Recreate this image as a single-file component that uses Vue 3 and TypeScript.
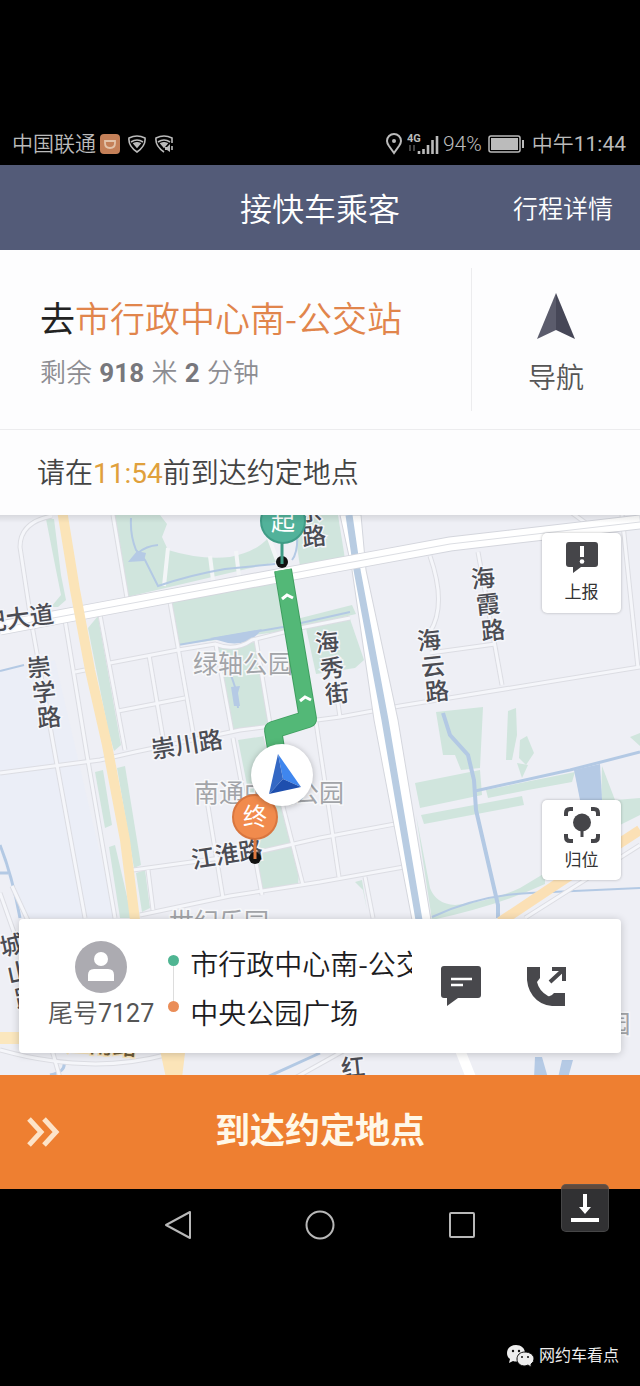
<script setup lang="ts">
interface Glyph { t: string; x: number; y: number; r: number }

const minorRoads: string[] = [
  'M0 773L100 760L135 752L240 730L340 717L400 706L640 667',
  'M133 870L250 854L320 838L395 824L406 815',
  'M140 915L230 896L320 882L415 865',
  'M52 516Q20 522 20 547L31 620L57 765L85 918',
  'M65 620L87 755L115 918',
  'M100 615L125 750',
  'M113 515L127 598',
  'M170 602L193 732',
  'M110 663L178 650L215 644Q235 652 252 640L300 628L350 618',
  'M118 711L185 698',
  'M149 655L163 738',
  'M216 645L232 732',
  'M256 640L271 730',
  'M207 800L223 898',
  'M233 738L262 895',
  'M265 736L303 885',
  'M316 722L339 877',
  'M430 556Q447 605 430 632L430 640',
  'M478 552L502 685',
  'M430 653L495 644',
  'M365 877L373 918',
  'M75 672L85 670',
  'M148 870L153 910',
  'M622 515L638 668',
  'M572 513L590 526',
  'M336 690L340 717',
  'M525 918L585 880L640 845',
  'M0 893L22 955',
  'M12 886L30 925',
  'M0 1050Q90 1075 165 1055',
  'M52 1050L60 1078',
  'M295 1078L345 1050',
]

const parks: string[] = [
  '46,519 54,519 61,575 66,600 58,607 51,607 61,595 56,570',
  '114,515 264,515 276,562 127,597',
  '292,515 338,515 345,559 300,566',
  '172,602 276,583 285,631 178,645',
  '285,622 352,605 356,614 285,631',
  '306,628 350,619 364,660 355,668 316,674',
  '217,647 255,642 272,727 232,732',
  '88,628 98,616 121,745 114,751 108,730',
  '95,772 103,770 112,825 105,828',
  '117,768 125,766 141,865 134,868',
  '109,847 115,845 132,918 120,918',
  '136,873 145,870 150,908 142,912',
  '238,740 265,736 300,865 298,884 262,889 250,800',
  '436,712 483,707 480,768 461,770 455,755 443,755',
  '415,783 480,770 482,795 420,808',
  '421,815 522,796 524,805 424,824',
  '486,790 575,772 572,782 528,790 488,798',
  '508,711 516,708 517,735 512,760 506,760 507,735',
  '520,740 527,736 534,753 526,765 519,758',
  '517,763 528,765 522,778',
  '602,766 615,800 640,798 640,815 600,835',
  '355,882 362,880 367,910 363,890',
  '630,737 640,733 640,746',
]

const pieces = (chars: string, pts: number[][], r: number): Glyph[] =>
  [...chars].map((t, i) => ({ t, x: pts[i][0], y: pts[i][1], r }))

const streets: Glyph[] = [
  { t: '纪大道', x: 18, y: 619, r: -8 },
  { t: '崇川路', x: 187, y: 745, r: -9 },
  { t: '江淮路', x: 227, y: 855, r: -9 },
  { t: '红', x: 353, y: 1068, r: -6 },
  ...pieces('崇学路', [[39, 668], [44, 693], [49, 718]], -6),
  ...pieces('海秀街', [[327, 643], [332, 669], [337, 694]], -6),
  ...pieces('海霞路', [[483, 579], [488, 605], [493, 631]], -6),
  ...pieces('海云路', [[429, 641], [433, 667], [437, 692]], -6),
  ...pieces('京路', [[310, 512], [314, 537]], -6),
  ...pieces('城山路', [[12, 946], [19, 973], [27, 998]], -12),
]

const places: Glyph[] = [
  { t: '绿轴公园', x: 243, y: 664, r: 0 },
  { t: '南通中央公园', x: 269, y: 793, r: 0 },
  { t: '世纪乐园', x: 219, y: 922, r: 0 },
  { t: '园', x: 618, y: 1024, r: 0 },
]
</script>

<template>
  <div class="page">
    <div class="status">
      <div class="status-group">
        <span>中国联通</span>
        <svg width="20" height="20" viewBox="0 0 20 20">
          <rect width="20" height="20" rx="4" fill="#c48058" />
          <path d="M5 7H15V9Q15 14 10 14Q5 14 5 9Z" fill="none" stroke="#e3c3a9" stroke-width="1.8" />
        </svg>
        <svg class="shield" width="20" height="20" viewBox="0 0 20 20" fill="none" stroke="#bbb" stroke-width="1.6">
          <path d="M2 4Q10 0 18 4Q19 12 10 18Q1 12 2 4Z" />
          <path d="M4 8Q10 4 16 8" /><path d="M7 9.5Q10 8 13 9.5L10 13Z" fill="#bbb" />
        </svg>
        <svg class="shield" width="20" height="20" viewBox="0 0 20 20" fill="none" stroke="#bbb" stroke-width="1.6">
          <path d="M10 18Q1 12 2 4Q10 0 18 4V9" />
          <path d="M4 8Q10 4 16 8" /><path d="M7 9.5Q10 8 13 9.5L10 13Z" fill="#bbb" />
          <path d="M11 13H13L16 10V18L13 16H11Z" fill="#bbb" stroke="none" /><path d="M18 12V16" />
        </svg>
      </div>
      <div class="status-group">
        <svg width="18" height="22" viewBox="0 0 18 22" fill="none" stroke="#bbb" stroke-width="2">
          <path d="M9 20L4 13Q2 10 2 8A7 7 0 0 1 16 8Q16 10 14 13Z" /><circle cx="9" cy="8" r="2" fill="#bbb" stroke="none" />
        </svg>
        <svg class="signal" width="32" height="24" viewBox="0 0 32 24">
          <text x="0" y="10" class="net">4G</text>
          <path d="M3 13V19M7 13V19" stroke="#444" stroke-width="2" />
          <path d="M12 19V22M16.5 17V22M21 13V22M25.5 8V22M30 4V22" stroke="#bbb" stroke-width="2.6" />
        </svg>
        <span>94%</span>
        <svg class="battery" width="37" height="18" viewBox="0 0 37 18">
          <rect x="1" y="1" width="31" height="16" rx="2" fill="none" stroke="#bbb" stroke-width="1.5" />
          <rect x="3" y="3" width="27" height="12" fill="#bbb" /><path d="M35 5V13" stroke="#bbb" stroke-width="2" />
        </svg>
        <span>中午<span class="digits">11:44</span></span>
      </div>
    </div>

    <header class="head">
      <h1>接快车乘客</h1>
      <a href="#trip">行程详情</a>
    </header>

    <section class="dest">
      <div class="dest-text">
        <h2>去<span>市行政中心南-公交站</span></h2>
        <p>剩余 <b>918</b> 米 <b>2</b> 分钟</p>
      </div>
      <button class="nav-btn" type="button">
        <svg width="38" height="46" viewBox="0 0 38 46">
          <path d="M19 0L0 46L19 37Z" fill="#5b5c6c" /><path d="M19 0L38 46L19 37Z" fill="#464757" />
        </svg>
        导航
      </button>
    </section>
    <p class="deadline">请在<time>11:54</time>前到达约定地点</p>

    <main class="map">
      <svg class="canvas" viewBox="0 515 640 560" preserveAspectRatio="xMidYMid slice">
        <rect x="-400" y="515" width="1440" height="560" fill="#eeeff5" />
        <path d="M0 670L55 660L115 918L20 918L0 850Z" fill="#ebeef7" />
        <polygon v-for="p in parks" :key="p" :points="p" fill="#d0e5dd" />
        <path d="M416 815L430 888Q436 904 455 905Q490 902 520 888L545 873V884Q500 905 432 920Z" fill="#d0e5dd" />
        <path d="M160 515L167 524L162 537L168 550Q200 560 230 557Q256 552 268 538L264 515Z" fill="#eeeff5" />
        <path d="M168 548L164 586M210 556L213 580M236 551L239 576M266 530L277 560" stroke="#f3f5f7" stroke-width="4" fill="none" />
        <g fill="none" stroke="#b3c9e4" stroke-width="2">
          <path d="M131 518Q130 535 136 550L145 560L158 586Q190 575 225 569L275 564M138 553Q146 546 158 545M292 560Q300 550 296 520" />
          <path d="M178 645L283 627L350 612" /><path d="M0 671L24 665" />
          <path d="M231 675L236 690L238 708" />
          <path d="M443 713L450 735L468 755L474 780L476 810L498 905V918" stroke-width="4" />
          <path d="M475 791L570 770L640 752" stroke-width="3" />
          <path d="M432 917Q480 895 530 893L640 888" />
          <path d="M0 845Q12 875 20 918M0 873H8" stroke-width="3" />
          <path d="M50 1075Q66 1072 64 1062M265 1078L320 1053" stroke-width="3" />
        </g>
        <g fill="#b5cae5">
          <path d="M137 551L146 553L144 561L128 562Z" /><path d="M210 638L262 629Q250 646 228 643Z" />
          <path d="M231 687L240 686L238 693L240 706L234 706Z" /><path d="M574 770L600 764L602 800H580Z" />
          <path d="M535 1057H542L548 1078H534ZM562 1060L573 1060L568 1078H558Z" />
        </g>
        <g fill="none">
          <path v-for="d in minorRoads" :key="d" :d="d" stroke="#dcdde3" stroke-width="5" />
          <path v-for="d in minorRoads" :key="d" :d="d" stroke="#f5f6fa" stroke-width="3" />
          <path d="M340 515L352 570L374 720L412 920H431L398 720L366 570L361 515Z" fill="#fff" stroke="#d4d6dd" />
          <path d="M349 515L357 570L385 720L419 920" stroke="#b8cce2" stroke-width="7" />
          <path d="M0 628L85 612L320 568L450 544L640 522" stroke="#d4d6dd" stroke-width="15" />
          <path d="M0 628L85 612L320 568L450 544L640 522" stroke="#fff" stroke-width="13" />
          <path d="M0 628L85 612L320 568L450 544L640 522" stroke="#dcdee3" />
          <path d="M460 1050L472 1080" stroke="#fff" stroke-width="10" />
          <path d="M62 510L75 590L90 670L107 745L125 840L135 920" stroke="#fbe4b8" stroke-width="10" />
          <path d="M500 922L560 882L640 830" stroke="#fbe0b5" stroke-width="10" />
          <path d="M0 1038H22" stroke="#fbe7be" stroke-width="12" />
        </g>
        <path d="M160 1050L185 1053L182 1078H166Z" fill="#fbe4b8" />

        <text v-for="(g, i) in places" :key="'p' + i" class="place" :x="g.x" :y="g.y">{{ g.t }}</text>
        <text v-for="(g, i) in streets" :key="'s' + i" class="street" :x="g.x" :y="g.y" :transform="`rotate(${g.r} ${g.x} ${g.y})`">{{ g.t }}</text>
        <text class="street highway" x="101" y="1045" transform="rotate(4 101 1045)">江南路</text>

        <path d="M283 570L308 719L273 730L277 755" fill="none" stroke="#3f9f60" stroke-width="18" stroke-linejoin="round" />
        <path d="M283 570L308 719L273 730L277 755" fill="none" stroke="#53b877" stroke-width="16" stroke-linejoin="round" />
        <path d="M282 599L287 595L293 598M300 701L305 697L311 700" fill="none" stroke="#fff" stroke-width="3" />

        <circle cx="282" cy="562" r="6" fill="#111" />
        <path d="M282 540V564" stroke="#3f9c86" stroke-width="3" />
        <circle cx="283" cy="521" r="22" fill="#52b29a" stroke="#3f9c86" stroke-width="2" />
        <text class="pin" x="283" y="522">起</text>

        <circle cx="255" cy="858" r="6" fill="#111" />
        <path d="M255 838V859" stroke="#e07a40" stroke-width="3" />
        <circle cx="255" cy="817" r="22" fill="#f18b4d" stroke="#d9763f" stroke-width="2" />
        <text class="pin" x="255" y="817">终</text>

        <circle class="here" cx="282" cy="775" r="31" fill="#fff" />
        <path d="M278 754L301 787L283 779Z" fill="#3f86ee" />
        <path d="M278 754L269 794L283 779Z" fill="#3468c4" />
        <path d="M269 794L301 787L283 779Z" fill="#1e4fae" />
      </svg>

      <button class="tool" type="button">
        <svg width="34" height="34" viewBox="0 0 34 34">
          <path d="M4 1H30Q33 1 33 4V23Q33 26 30 26H16L8 32V26H4Q1 26 1 23V4Q1 1 4 1Z" fill="#454549" />
          <path d="M17 5V16" stroke="#fff" stroke-width="4" /><circle cx="17" cy="20.5" r="2.3" fill="#fff" />
        </svg>
        上报
      </button>
      <button class="tool" type="button">
        <svg width="36" height="36" viewBox="0 0 36 36">
          <path d="M2 9V6Q2 2 6 2H9M27 2H30Q34 2 34 6V9M34 27V30Q34 34 30 34H27M9 34H6Q2 34 2 30V27" fill="none" stroke="#454549" stroke-width="4" />
          <circle cx="18" cy="15.5" r="9" fill="#454549" /><path d="M18 22V30" stroke="#454549" stroke-width="3" />
        </svg>
        归位
      </button>

      <section class="rider">
        <div class="who">
          <svg width="52" height="52" viewBox="0 0 52 52">
            <circle cx="26" cy="26" r="26" fill="#acabb1" /><circle cx="26" cy="18" r="7" fill="#fff" />
            <path d="M13 40V34Q13 28 19 28H33Q39 28 39 34V40Z" fill="#fff" />
          </svg>
          <span>尾号<span class="digits">7127</span></span>
        </div>
        <ul class="route">
          <li>市行政中心南-公交站</li>
          <li>中央公园广场</li>
        </ul>
        <div class="actions">
          <button type="button" aria-label="发消息">
            <svg width="42" height="42" viewBox="0 0 42 42">
              <path d="M4 1H38Q41 1 41 4V30Q41 33 38 33H18L7 41V33H4Q1 33 1 30V4Q1 1 4 1Z" fill="#48484c" />
              <path d="M11 14H32M11 20H23" stroke="#fff" stroke-width="2.5" />
            </svg>
          </button>
          <button type="button" aria-label="打电话">
            <svg width="42" height="42" viewBox="0 0 42 42">
              <path d="M1 2H14V13L11 17Q13 26 22 31Q25 32 28 28H39V41H26Q14 40 7 31Q0 22 1 8Z" fill="#48484c" />
              <path d="M24 17L37 5M26 4H38V16" fill="none" stroke="#48484c" stroke-width="4" />
            </svg>
          </button>
        </div>
      </section>
    </main>

    <button class="arrive" type="button">
      <svg width="34" height="30" viewBox="0 0 34 30" fill="none" stroke="#fde3c8" stroke-width="5">
        <path d="M2 2L14 15L2 28M17 2L29 15L17 28" />
      </svg>
      <span>到达约定地点</span>
    </button>

    <nav class="system">
      <button type="button" aria-label="返回">
        <svg width="30" height="30" viewBox="0 0 30 30"><path d="M27 2V28L3 15Z" /></svg>
      </button>
      <button type="button" aria-label="主页">
        <svg width="30" height="30" viewBox="0 0 30 30"><circle cx="15" cy="15" r="13.5" /></svg>
      </button>
      <button type="button" aria-label="最近任务">
        <svg width="30" height="30" viewBox="0 0 30 30"><rect x="3" y="3" width="24" height="24" rx="1" /></svg>
      </button>
      <button class="save" type="button" aria-label="下载">
        <svg width="28" height="28" viewBox="0 0 28 28">
          <path d="M12 0H16V13H20L14 20L8 13H12ZM0 24H28V28H0Z" fill="#fff" />
        </svg>
      </button>
    </nav>

    <footer class="source">
      <svg width="28" height="24" viewBox="0 0 28 24">
        <path d="M10 1C4 1 1 5 1 9Q1 13 4 15L3 19L7 17Q10 18 13 17C18 16 19 12 19 9C19 4 15 1 10 1Z" fill="#eee" />
        <circle cx="7" cy="7" r="1.2" fill="#111" /><circle cx="13" cy="7" r="1.2" fill="#111" />
        <path d="M19 8C14 8 11 11 11 15C11 19 14 22 19 22L22 21L25 23V20Q28 18 28 15C28 11 24 8 19 8Z" fill="#eee" stroke="#111" />
        <circle cx="16" cy="13" r="1" fill="#111" /><circle cx="22" cy="13" r="1" fill="#111" />
      </svg>
      网约车看点
    </footer>
  </div>
</template>

<style>
body { margin: 0; background: #000; }
</style>

<style scoped>
.page {
  min-height: 100vh;
  display: flex;
  flex-direction: column;
  background: #000;
  font-family: Roboto, "Noto Sans CJK SC", sans-serif;
  font-weight: 350;
}
h1, h2, p, ul { margin: 0; padding: 0; font-weight: 350; }
svg { display: block; flex: none; }
button { border: 0; padding: 0; background: none; font: inherit; cursor: pointer; }
.digits { font-weight: 400; }

.status {
  display: flex;
  justify-content: space-between;
  padding: 124px 14px 1px 12px;
  color: #bbb;
  font-size: 21px;
  line-height: 40px;
}
.status-group { display: flex; align-items: center; gap: 4px; }
.shield { margin-left: 3px; }
.battery { margin: 0 3px 0 2px; }
.net { font: 700 11px Roboto, sans-serif; fill: #bbb; }

.head {
  display: grid;
  grid-template-columns: 1fr auto 1fr;
  align-items: center;
  height: 81px;
  padding: 4px 27px 0;
  background: #535b78;
  color: #fff;
}
.head h1 { grid-column: 2; font-size: 32px; line-height: 44px; }
.head a { justify-self: end; color: #fff; font-size: 25px; line-height: 36px; text-decoration: none; }

.dest {
  display: flex;
  padding: 18px 0;
  background: #fdfdfe;
  border-bottom: 1px solid #ececee;
}
.dest-text { flex: 1; padding: 25px 0 0 40px; min-width: 0; }
.dest h2 {
  font-family: "Noto Sans CJK SC", sans-serif;
  font-size: 35px;
  line-height: 48px;
  color: #222;
  font-weight: 400;
  white-space: nowrap;
}
.dest h2 span { color: #e1854c; font-weight: 350; }
.dest p { margin-top: 14px; font-size: 26px; line-height: 36px; color: #8d8d92; }
.dest b { margin: 0 1px; font-weight: 700; color: #77777c; }
.nav-btn {
  width: 169px;
  height: 143px;
  display: flex;
  flex-direction: column;
  align-items: center;
  gap: 20px;
  padding-top: 25px;
  border-left: 1px solid #ececee;
  color: #555;
  font-size: 28px;
  line-height: 40px;
}
.deadline {
  padding: 3px 37px 0;
  background: #fdfdfe;
  color: #444;
  font-size: 28px;
  line-height: 82px;
}
.deadline time { color: #e0a03c; font-weight: 400; }

.map {
  position: relative;
  display: flex;
  flex-direction: column;
  align-items: flex-end;
  padding: 18px 19px 22px;
  overflow: hidden;
  background: #eeeff5;
}
.canvas { position: absolute; inset: 0; width: 100%; height: 100%; }
.map::after {
  content: "";
  position: absolute;
  inset: 0 0 auto;
  height: 8px;
  background: linear-gradient(#00000018, #0000);
}
.street, .place, .pin { text-anchor: middle; dominant-baseline: central; }
.street { font-size: 24px; font-weight: 500; fill: #4b4c53; stroke: #f5f6fa; stroke-width: 3px; paint-order: stroke; }
.highway { fill: #6e5c38; stroke: #fbe7be; }
.place { font-size: 25px; font-weight: 400; fill: #a2a4a8; stroke: #f7f8fa; stroke-width: 3px; paint-order: stroke; }
.pin { font-size: 24px; font-weight: 400; fill: #fff; }
.here { filter: drop-shadow(0 1px 3px #0004); }

.tool {
  position: relative;
  display: flex;
  flex-direction: column;
  align-items: center;
  justify-content: center;
  gap: 4px;
  width: 79px;
  height: 80px;
  margin-bottom: 187px;
  border-radius: 5px;
  background: #fff;
  box-shadow: 0 0 3px #0004;
  color: #333;
  font-size: 17px;
  font-weight: 400;
  line-height: 26px;
}
.tool + .tool { margin-bottom: 39px; }

.rider {
  position: relative;
  align-self: stretch;
  display: flex;
  align-items: center;
  height: 134px;
  border-radius: 4px;
  background: #fff;
  box-shadow: 0 1px 8px #0003;
}
.who {
  display: flex;
  flex-direction: column;
  align-items: center;
  gap: 4px;
  padding: 0 14px 0 29px;
  color: #555;
  font-size: 25px;
  line-height: 34px;
}
.route {
  position: relative;
  flex: 1;
  min-width: 0;
  padding: 4px 0 0 22px;
  list-style: none;
  color: #1c1c1f;
  font-family: "Noto Sans CJK SC", sans-serif;
  font-size: 28px;
  line-height: 49px;
}
.route li { overflow: hidden; white-space: nowrap; }
.route li::before {
  content: "";
  position: absolute;
  left: 0;
  width: 11px;
  height: 11px;
  margin-top: 16px;
  border-radius: 50%;
  background: #4fb592;
}
.route li + li::before { background: #ea8d58; margin-top: 13px; }
.route::before {
  content: "";
  position: absolute;
  left: 5px;
  top: 30px;
  bottom: 36px;
  border-left: 1px solid #ddd;
}
.actions { display: flex; gap: 44px; padding: 0 53px 0 28px; }

.arrive {
  display: grid;
  grid-template-columns: 1fr auto 1fr;
  align-items: center;
  height: 114px;
  padding: 0 27px;
  background: #ee7f31;
  color: #fff8e8;
  font-size: 35px;
  font-weight: 700;
  line-height: 48px;
}

.system {
  position: relative;
  display: flex;
  justify-content: center;
  gap: 112px;
  padding: 21px 0;
}
.system > button > svg { fill: none; stroke: #b8b8b8; stroke-width: 2; stroke-linejoin: round; }
.system .save {
  position: absolute;
  right: 31px;
  top: -5px;
  width: 48px;
  height: 48px;
  display: grid;
  place-items: center;
  border: 1px solid #6666;
  border-radius: 5px;
  background: #3d3d40cc;
}
.system .save svg { stroke: none; }

.source {
  display: flex;
  align-items: center;
  justify-content: flex-end;
  gap: 5px;
  margin-top: auto;
  padding: 0 21px 18px 0;
  color: #eee;
  font-size: 16px;
  font-weight: 400;
  line-height: 24px;
}
</style>
